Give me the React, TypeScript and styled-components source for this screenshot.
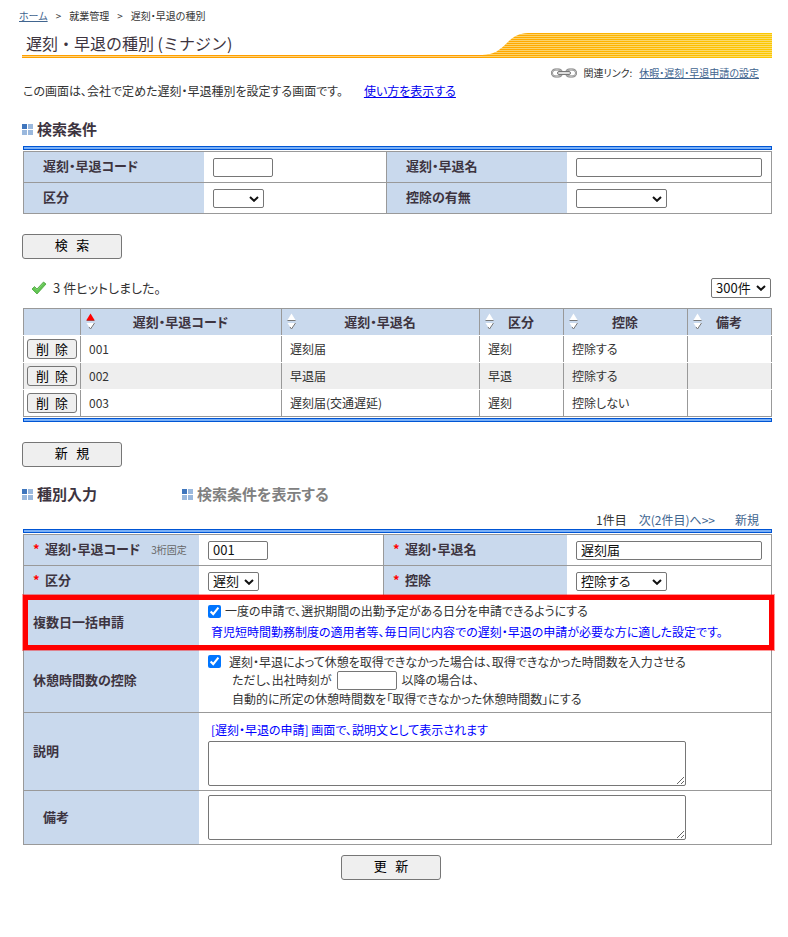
import React from "react";
import styled, { createGlobalStyle, css } from "styled-components";

const fontStack = `"Noto Sans CJK JP", "Noto Sans", sans-serif`;
const line = "#999999";
const labelBg = "#c9d9ed";
const ink = "#333333";

const GlobalStyle = createGlobalStyle`
  *, *::before, *::after { box-sizing: border-box; }
  body {
    margin: 0;
    background: #ffffff;
    color: ${ink};
    font-family: ${fontStack};
    font-size: 12px;
    line-height: 18px;
    font-feature-settings: "palt";
  }
  button, input, select, textarea {
    font-family: ${fontStack};
    font-size: 13px;
    font-feature-settings: "palt";
  }
`;

const Page = styled.main`
  padding: 8px 16px 56px 22px;
`;

const Breadcrumb = styled.nav`
  display: flex;
  gap: 8px;
  margin-left: -3px;
  font-size: 10px;
  line-height: 16px;
`;

const SubtleLink = styled.a<{ $plain?: boolean }>`
  color: #41658f;
  text-decoration: ${(p) => (p.$plain ? "none" : "underline")};
`;

const TitleBar = styled.header`
  display: flex;
  height: 25px;
  margin-top: 9px;
`;

const TitleText = styled.h1`
  flex: 1;
  margin: 0;
  padding-left: 4px;
  background: linear-gradient(#ffa000 1px, #ffd27a 1px 2px, #ffa000 2px) bottom / 100% 3px no-repeat;
  color: #3d3440;
  font-size: 16px;
  font-weight: 400;
  line-height: 20px;
  font-feature-settings: normal;
`;

const Related = styled.div`
  display: flex;
  justify-content: flex-end;
  align-items: center;
  gap: 7px;
  margin-top: 6px;
  padding-right: 13px;
  font-size: 10px;
  line-height: 18px;
`;

const Intro = styled.p`
  display: flex;
  gap: 21px;
  margin: 0 0 19px 1px;
`;

const HelpLink = styled.a`
  color: #0000ee;
`;

const Headings = styled.div<{ $gap?: boolean }>`
  display: flex;
  margin-top: ${(p) => (p.$gap ? "17px" : "0")};
`;

const Heading = styled.h2<{ $muted?: boolean }>`
  display: flex;
  align-items: center;
  gap: 4px;
  min-width: 160px;
  margin: 0;
  color: ${(p) => (p.$muted ? "#808080" : "#3d3440")};
  font-size: 15px;
  font-weight: 700;
  line-height: 20px;
`;

const Rule = styled.div<{ $after?: boolean }>`
  height: 4px;
  margin: ${(p) => (p.$after ? "0 0 0 1px" : "0 0 1px 1px")};
  background: #7ab0f7;
  border: 1px solid #0055d4;
`;

const Panel = styled.section`
  margin-top: 7px;
`;

const FormTable = styled.table`
  width: calc(100% - 1px);
  margin-left: 1px;
  table-layout: fixed;
  border-collapse: separate;
  border-spacing: 0;
  border: solid ${line};
  border-width: 1px 0 0 1px;
`;

const Col = styled.col<{ $w?: number }>`
  width: ${(p) => (p.$w ? `${p.$w}px` : "auto")};
`;

const LabelCell = styled.th<{ $indent: number }>`
  padding: 0 0 2px ${(p) => p.$indent}px;
  background: ${labelBg};
  border-bottom: 1px solid ${line};
  color: #3d3440;
  font-size: 13px;
  font-weight: 700;
  text-align: left;
`;

const Row = styled.tr<{ $h: number; $marked?: boolean }>`
  height: ${(p) => p.$h}px;
  ${(p) =>
    p.$marked &&
    css`
      position: relative;
      ${LabelCell}::after {
        content: "";
        position: absolute;
        inset: -2px -2px -1px -1px;
        border: 5px solid #ff0000;
        outline: 1px solid rgba(255, 0, 0, 0.4);
        pointer-events: none;
      }
    `}
`;

const FieldCell = styled.td`
  padding: 0 9px;
  border: solid ${line};
  border-width: 0 1px 1px 0;
`;

const Required = styled.span`
  display: inline-block;
  width: 12px;
  color: #ff0000;
`;

const Hint = styled.span`
  margin-left: 11px;
  color: #666666;
  font-size: 10px;
  font-weight: 400;
`;

const fieldBox = css`
  height: 19px;
  background-color: #ffffff;
  border: 1px solid #767676;
  border-radius: 2px;
  color: #111111;
  vertical-align: middle;
`;

const TextField = styled.input<{ $wide?: boolean }>`
  ${fieldBox}
  width: ${(p) => (p.$wide ? "100%" : "60px")};
  padding: 0 4px 2px;
  line-height: 15px;
`;

const chevron =
  "data:image/svg+xml,%3Csvg xmlns='http://www.w3.org/2000/svg' width='10' height='6'%3E%3Cpath d='M1 1L5 4.8L9 1' fill='none' stroke='%23111' stroke-width='2'/%3E%3C/svg%3E";

const Select = styled.select<{ $w: number; $tall?: boolean }>`
  ${fieldBox}
  appearance: none;
  width: ${(p) => p.$w}px;
  height: ${(p) => (p.$tall ? 20 : 19)}px;
  padding: 0 15px 1px 4px;
  background-image: url("${chevron}");
  background-repeat: no-repeat;
  background-position: right 4px center;
  line-height: 16px;
`;

const Area = styled.textarea`
  display: block;
  width: 478px;
  max-width: 100%;
  height: 45px;
  border: 1px solid #767676;
  border-radius: 2px;
`;

const Button = styled.button<{ $small?: boolean }>`
  display: block;
  width: ${(p) => (p.$small ? "50px" : "100px")};
  height: ${(p) => (p.$small ? "20px" : "25px")};
  padding: ${(p) => (p.$small ? "0" : "0 0 3px")};
  background: #efefef;
  border: 1px solid #767676;
  border-radius: 3px;
  color: #000000;
  line-height: 18px;
`;

const Actions = styled.div<{ $center?: boolean }>`
  display: flex;
  justify-content: ${(p) => (p.$center ? "center" : "flex-start")};
  margin-top: ${(p) => (p.$center ? "10px" : "20px")};
  padding-right: 12px;
`;

const HitBar = styled.div`
  display: flex;
  justify-content: space-between;
  align-items: center;
  margin: 19px 1px 9px 9px;
  line-height: 20px;
`;

const HitMessage = styled.p`
  display: flex;
  align-items: center;
  gap: 6px;
  margin: 0;
  font-size: 13px;
`;

const ResultTable = styled.table`
  width: calc(100% - 1px);
  margin-left: 1px;
  table-layout: fixed;
  border-collapse: separate;
  border-spacing: 0 1px;
`;

const ResultHead = styled.th`
  height: 27px;
  padding: 0 0 0 1px;
  background: ${labelBg};
  border: solid ${line};
  border-width: 1px 0 0 1px;
  color: #3d3440;
  font-size: 13px;
  font-weight: 700;
  &:last-child { border-right-width: 1px; }
`;

const HeadInner = styled.div`
  display: grid;
  grid-template-columns: 16px 1fr 18px;
  align-items: center;
  justify-items: center;
  padding-bottom: 1px;
`;

const ResultRow = styled.tr`
  height: 26px;
  &:nth-child(even) { background: #eeeeee; }
  &:last-child { height: 27px; }
  &:last-child td { border-bottom: 1px solid ${line}; }
`;

const ResultCell = styled.td<{ $action?: boolean }>`
  padding: ${(p) => (p.$action ? "0 0 0 3px" : "0 0 1px 8px")};
  border-left: 1px solid ${line};
  &:last-child { border-right: 1px solid ${line}; }
`;

const Pager = styled.nav`
  display: flex;
  justify-content: flex-end;
  margin-top: 7px;
  padding-right: 13px;
  gap: 12px;
`;

const PagerNew = styled(SubtleLink)`
  margin-left: 8px;
`;

const CheckLine = styled.label<{ $gap: number }>`
  display: flex;
  align-items: center;
  gap: ${(p) => p.$gap}px;
`;

const Check = styled.input`
  flex: none;
  width: 13px;
  height: 13px;
  margin: 0;
  accent-color: #0075ff;
`;

const Note = styled.p`
  margin: 3px 0 2px 3px;
  color: #0000ff;
`;

const Detail = styled.div`
  display: flex;
  align-items: center;
  gap: 5px;
  height: 19px;
  padding-left: 24px;
`;

const LinkIcon = () => (
  <svg width="26" height="10" viewBox="0 0 26 10" fill="none" aria-hidden="true">
    <rect x="1" y="1.5" width="10" height="7" rx="3.5" stroke="#777" strokeWidth="2" />
    <rect x="15" y="1.5" width="10" height="7" rx="3.5" stroke="#777" strokeWidth="2" />
    <rect x="1" y="1.5" width="10" height="7" rx="3.5" stroke="#ccc" strokeWidth="0.8" />
    <rect x="15" y="1.5" width="10" height="7" rx="3.5" stroke="#ccc" strokeWidth="0.8" />
    <rect x="6.5" y="3.5" width="13" height="3" rx="1.5" fill="#ddd" stroke="#777" />
  </svg>
);

const Swoosh = () => (
  <svg width="290" height="25" viewBox="0 0 290 25" aria-hidden="true">
    <defs>
      <linearGradient id="gold" x1="0" x2="1">
        <stop offset="0" stopColor="#ffa500" />
        <stop offset="1" stopColor="#fcc800" />
      </linearGradient>
      <pattern id="stripes" width="4" height="2" patternUnits="userSpaceOnUse">
        <rect y="1" width="4" height="1" fill="#fbe59a" fillOpacity="0.7" />
      </pattern>
      <clipPath id="wave">
        <path d="M0 22C12 22 18 17 25 10C31 4 37 0 46 0H290V25H0Z" />
      </clipPath>
    </defs>
    <g clipPath="url(#wave)">
      <rect width="290" height="25" fill="url(#gold)" />
      <rect width="290" height="25" fill="url(#stripes)" />
    </g>
  </svg>
);

const Squares = () => (
  <svg width="11" height="11" viewBox="0 0 11 11" aria-hidden="true">
    <rect width="5" height="5" fill="#3f76bd" />
    <rect x="6" width="5" height="5" fill="#9ab8dd" />
    <rect y="6" width="5" height="5" fill="#9ab8dd" />
    <rect x="6" y="6" width="5" height="5" fill="#9ab8dd" />
  </svg>
);

const CheckIcon = () => (
  <svg width="16" height="14" viewBox="0 0 16 14" aria-hidden="true">
    <path d="M1 8L3.5 5.5L6 8L12.5 1L15 3L6 13Z" fill="#62c552" stroke="#4aa33c" strokeWidth="0.8" strokeLinejoin="round" />
    <path d="M3.5 6.7L6 9.2L12.5 2.3" fill="none" stroke="#7fd370" />
  </svg>
);

const SortIcon = ({ active }: { active?: boolean }) => (
  <svg width="9" height="17" viewBox="0 0 9 17" aria-hidden="true">
    <path d="M4.5 0.5L8.5 7H0.5Z" fill={active ? "#ff0000" : "#ffffff"} />
    <path d="M0.5 7.5H8.5" stroke={active ? "#b04040" : "#777777"} />
    <path d="M0.5 10H8.5L4.5 16Z" fill="#ffffff" />
    <path d="M8.5 10L4.5 16L3 14" fill="none" stroke="#777777" />
  </svg>
);

const columns = ["遅刻・早退コード", "遅刻・早退名", "区分", "控除", "備考"];
const results = [
  ["001", "遅刻届", "遅刻", "控除する", ""],
  ["002", "早退届", "早退", "控除する", ""],
  ["003", "遅刻届(交通遅延)", "遅刻", "控除しない", ""],
];

export default function App() {
  return (
    <>
      <GlobalStyle />
      <Page>
        <Breadcrumb>
          <SubtleLink href="#home">ホーム</SubtleLink>
          <span>&gt;</span>
          <span>就業管理</span>
          <span>&gt;</span>
          <span>遅刻・早退の種別</span>
        </Breadcrumb>
        <TitleBar>
          <TitleText>遅刻・早退の種別 (ミナジン)</TitleText>
          <Swoosh />
        </TitleBar>
        <Related>
          <LinkIcon />
          <span>関連リンク:</span>
          <SubtleLink href="#request">休暇・遅刻・早退申請の設定</SubtleLink>
        </Related>
        <Intro>
          <span>この画面は、会社で定めた遅刻・早退種別を設定する画面です。</span>
          <HelpLink href="#help">使い方を表示する</HelpLink>
        </Intro>

        <Headings>
          <Heading><Squares />検索条件</Heading>
        </Headings>
        <Panel>
          <Rule />
          <FormTable>
            <colgroup><Col $w={180} /><Col $w={183} /><Col $w={180} /><Col /></colgroup>
            <tbody>
              <Row $h={31}>
                <LabelCell $indent={19}><label htmlFor="qcode">遅刻・早退コード</label></LabelCell>
                <FieldCell><TextField id="qcode" /></FieldCell>
                <LabelCell $indent={19}><label htmlFor="qname">遅刻・早退名</label></LabelCell>
                <FieldCell><TextField id="qname" $wide /></FieldCell>
              </Row>
              <Row $h={31}>
                <LabelCell $indent={19}><label htmlFor="qkind">区分</label></LabelCell>
                <FieldCell><Select id="qkind" $w={51}><option></option></Select></FieldCell>
                <LabelCell $indent={19}><label htmlFor="qded">控除の有無</label></LabelCell>
                <FieldCell><Select id="qded" $w={91}><option></option></Select></FieldCell>
              </Row>
            </tbody>
          </FormTable>
        </Panel>
        <Actions><Button type="button">検&nbsp;&nbsp;&nbsp;索</Button></Actions>

        <HitBar>
          <HitMessage><CheckIcon />3 件ヒットしました。</HitMessage>
          <Select $w={60} $tall aria-label="表示件数"><option>300件</option></Select>
        </HitBar>
        <ResultTable>
          <colgroup>
            <Col $w={57} /><Col $w={201} /><Col $w={198} /><Col $w={84} /><Col $w={124} /><Col />
          </colgroup>
          <thead>
            <tr>
              <ResultHead />
              {columns.map((name, i) => (
                <ResultHead key={name}>
                  <HeadInner><SortIcon active={i === 0} /><span>{name}</span></HeadInner>
                </ResultHead>
              ))}
            </tr>
          </thead>
          <tbody>
            {results.map((cells) => (
              <ResultRow key={cells[0]}>
                <ResultCell $action><Button type="button" $small>削&nbsp;&nbsp;除</Button></ResultCell>
                {cells.map((text, i) => <ResultCell key={i}>{text}</ResultCell>)}
              </ResultRow>
            ))}
          </tbody>
        </ResultTable>
        <Rule $after />
        <Actions><Button type="button">新&nbsp;&nbsp;&nbsp;規</Button></Actions>

        <Headings $gap>
          <Heading><Squares />種別入力</Heading>
          <Heading $muted><Squares />検索条件を表示する</Heading>
        </Headings>
        <Pager>
          <span>1件目</span>
          <SubtleLink $plain href="#next">次(2件目)へ&gt;&gt;</SubtleLink>
          <PagerNew $plain href="#new">新規</PagerNew>
        </Pager>
        <Rule />
        <FormTable>
          <colgroup><Col $w={175} /><Col $w={185} /><Col $w={183} /><Col /></colgroup>
          <tbody>
            <Row $h={31}>
              <LabelCell $indent={9}>
                <Required>*</Required><label htmlFor="code">遅刻・早退コード</label><Hint>3桁固定</Hint>
              </LabelCell>
              <FieldCell><TextField id="code" defaultValue="001" /></FieldCell>
              <LabelCell $indent={9}><Required>*</Required><label htmlFor="name">遅刻・早退名</label></LabelCell>
              <FieldCell><TextField id="name" $wide defaultValue="遅刻届" /></FieldCell>
            </Row>
            <Row $h={31}>
              <LabelCell $indent={9}><Required>*</Required><label htmlFor="kind">区分</label></LabelCell>
              <FieldCell><Select id="kind" $w={51}><option>遅刻</option></Select></FieldCell>
              <LabelCell $indent={9}><Required>*</Required><label htmlFor="ded">控除</label></LabelCell>
              <FieldCell><Select id="ded" $w={91}><option>控除する</option></Select></FieldCell>
            </Row>
            <Row $h={52} $marked>
              <LabelCell $indent={9}>複数日一括申請</LabelCell>
              <FieldCell colSpan={3}>
                <CheckLine $gap={4}>
                  <Check type="checkbox" defaultChecked />
                  一度の申請で、選択期間の出勤予定がある日分を申請できるようにする
                </CheckLine>
                <Note>育児短時間勤務制度の適用者等、毎日同じ内容での遅刻・早退の申請が必要な方に適した設定です。</Note>
              </FieldCell>
            </Row>
            <Row $h={64}>
              <LabelCell $indent={9}>休憩時間数の控除</LabelCell>
              <FieldCell colSpan={3}>
                <CheckLine $gap={8}>
                  <Check type="checkbox" defaultChecked />
                  遅刻・早退によって休憩を取得できなかった場合は、取得できなかった時間数を入力させる
                </CheckLine>
                <Detail>
                  <label htmlFor="from">ただし、出社時刻が</label>
                  <TextField id="from" />
                  <span>以降の場合は、</span>
                </Detail>
                <Detail>自動的に所定の休憩時間数を「取得できなかった休憩時間数」にする</Detail>
              </FieldCell>
            </Row>
            <Row $h={78}>
              <LabelCell $indent={9}><label htmlFor="desc">説明</label></LabelCell>
              <FieldCell colSpan={3}>
                <Note>[遅刻・早退の申請] 画面で、説明文として表示されます</Note>
                <Area id="desc" />
              </FieldCell>
            </Row>
            <Row $h={54}>
              <LabelCell $indent={19}><label htmlFor="memo">備考</label></LabelCell>
              <FieldCell colSpan={3}><Area id="memo" /></FieldCell>
            </Row>
          </tbody>
        </FormTable>
        <Actions $center><Button type="button">更&nbsp;&nbsp;&nbsp;新</Button></Actions>
      </Page>
    </>
  );
}
